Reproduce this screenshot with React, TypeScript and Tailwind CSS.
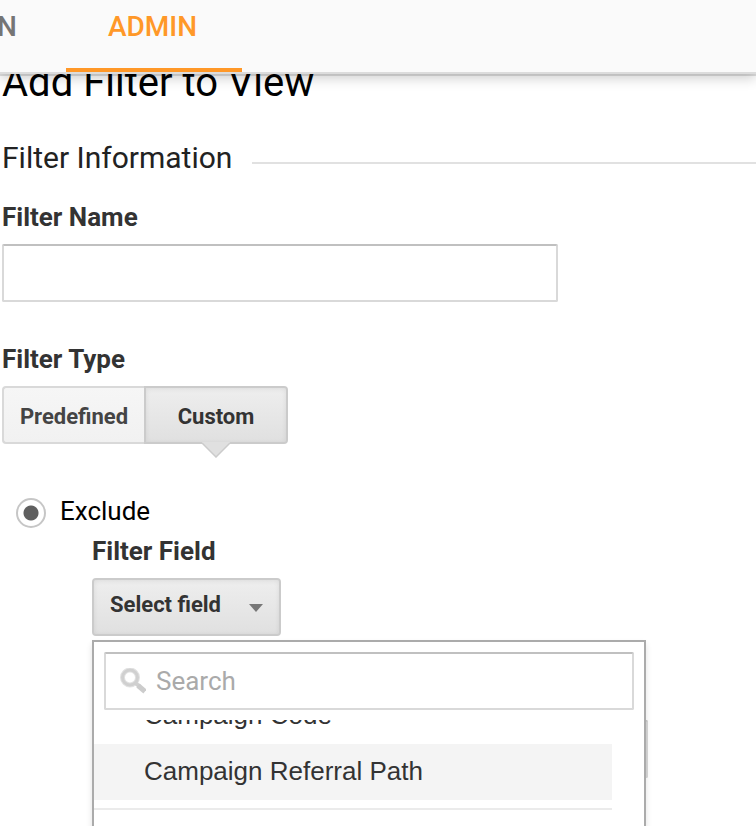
import { useState } from "react";

const fields = ["Campaign Code", "Campaign Referral Path"];

const inputStyle =
  "h-[58px] w-full border-2 border-[#d9d9d9] border-t-[#c0c0c0] rounded-[2px] bg-white outline-none";

const pressedStyle =
  "border-2 border-[#cbcbcb] bg-linear-to-b from-[#eeeeee] to-[#e0e0e0] shadow-[inset_0_1px_5px_rgba(0,0,0,0.08)]";

const labelStyle = "block text-[26px] leading-8 font-bold text-[#333]";

const SearchIcon = () => (
  <svg viewBox="0 0 26 26" className="w-[26px] h-[26px] shrink-0" fill="none">
    <circle cx="10" cy="9.5" r="7.5" stroke="#e2e2e2" strokeWidth="5" />
    <circle cx="10" cy="9.5" r="7.5" stroke="#d0d0d0" strokeWidth="3" />
    <path d="M15.5 15l4 3.5" stroke="#d0d0d0" strokeWidth="4" />
    <path d="M18 17.5l7 6" stroke="#cccccc" strokeWidth="5" />
  </svg>
);

const TopNav = () => (
  <header className="relative z-10 bg-[#fafafa] border-b-2 border-[#dcdcdc] shadow-[0_2px_0_rgba(0,0,0,0.12),0_4px_12px_rgba(0,0,0,0.2)]">
    <nav className="flex h-18 text-[28px] leading-8 font-medium">
      <a href="#" className="-ml-[3px] w-[69px] pt-[11px] text-[#757575]">
        N
      </a>
      <a
        href="#"
        className="w-44 pt-[11px] pr-[3px] text-center text-[#ff9828] border-b-4 border-[#ff9828]"
      >
        ADMIN
      </a>
    </nav>
  </header>
);

const FieldMenu = () => {
  const [search, setSearch] = useState("");

  return (
    <div className="absolute top-full left-0 mt-1 w-[554px] h-96 border-2 border-[#ababab] bg-white shadow-[0_4px_6px_rgba(0,0,0,0.12)]">
      <div className="p-2.5">
        <div className={`${inputStyle} flex items-center gap-2.5 px-3.5`}>
          <SearchIcon />
          <input
            type="text"
            aria-label="Search"
            placeholder="Search"
            value={search}
            onChange={(e) => setSearch(e.target.value)}
            className="min-w-0 grow text-[26px] leading-8 outline-none text-[#333] placeholder:text-[#aaa]"
          />
        </div>
      </div>
      <div className="mr-8 overflow-hidden">
        <ul className="-mt-8 pb-2 border-b-2 border-[#ebebeb] font-['Liberation_Sans',sans-serif] text-[26px] text-[#333]">
          {fields.map((field) => (
            <li key={field} className="last:bg-[#f4f4f4]">
              <button
                type="button"
                className="block w-full h-14 pl-[50px] pb-0.5 text-left"
              >
                {field}
              </button>
            </li>
          ))}
        </ul>
      </div>
    </div>
  );
};

export default function App() {
  return (
    <div className="h-screen overflow-hidden bg-white font-[Roboto,sans-serif] text-black">
      <TopNav />
      <main className="-mt-[11px] pl-0.5">
        <h1 className="text-[40px] leading-10">Add Filter to View</h1>

        <div className="mt-[35px] flex items-center gap-5">
          <h2 className="text-[30px] leading-10 text-[#222]">
            Filter Information
          </h2>
          <div className="mt-2.5 h-0.5 grow bg-[#e1e1e1]" />
        </div>

        <div className="mt-[23px] max-w-[556px]">
          <label htmlFor="filter-name" className={labelStyle}>
            Filter Name
          </label>
          <input
            id="filter-name"
            type="text"
            className={`${inputStyle} mt-[11px] block px-3 text-[26px]`}
          />
        </div>

        <div className="mt-[41px]">
          <h3 className={labelStyle}>Filter Type</h3>
          <div className="mt-[11px] flex text-[22px] leading-8 font-bold">
            <button
              type="button"
              className="w-[142px] h-[58px] pt-1 border-2 border-r-0 border-[#d9d9d9] rounded-l-[4px] bg-linear-to-b from-[#f6f6f6] to-[#f1f1f1] text-[#444]"
            >
              Predefined
            </button>
            <button
              type="button"
              className={`${pressedStyle} relative w-36 h-[58px] pt-1 rounded-r-[4px] text-[#333]`}
            >
              Custom
              <svg
                viewBox="0 0 28 16"
                className="absolute top-[54px] left-14 w-7 h-4"
              >
                <path d="M0 0H28V1L14 15L0 1Z" fill="#e0e0e0" />
                <path
                  d="M0 1L14 15L28 1"
                  fill="none"
                  stroke="#cbcbcb"
                  strokeWidth="1.5"
                />
              </svg>
            </button>
          </div>
        </div>

        <div className="mt-[51px] pl-3.5">
          <label className="flex items-center gap-3.5 text-[26px] leading-8">
            <input
              type="radio"
              name="filter-mode"
              defaultChecked
              className="appearance-none mt-0.5 -mb-0.5 w-[30px] h-[30px] rounded-full border-2 border-[#c6c6c6] bg-white checked:bg-[radial-gradient(circle,#5f5f5f_7px,transparent_8px)]"
            />
            Exclude
          </label>
        </div>

        <div className="mt-2 ml-[90px] max-w-[556px]">
          <h3 className={labelStyle}>Filter Field</h3>
          <div className="relative mt-[11px]">
            <button
              type="button"
              aria-haspopup="listbox"
              aria-expanded="true"
              className={`${pressedStyle} flex items-center gap-7 h-[58px] w-[189px] px-4 pb-1 rounded-[4px] text-[22px] leading-8 font-bold text-[#333]`}
            >
              Select field
              <svg viewBox="0 0 14 8" className="mt-1.5 w-3.5 h-2 shrink-0">
                <path d="M0 0H14L7 8Z" fill="#777" />
              </svg>
            </button>
            <FieldMenu />
          </div>
          <input
            type="text"
            aria-label="Filter Pattern"
            className={`${inputStyle} mt-21 block px-3 text-[26px]`}
          />
        </div>
      </main>
    </div>
  );
}
